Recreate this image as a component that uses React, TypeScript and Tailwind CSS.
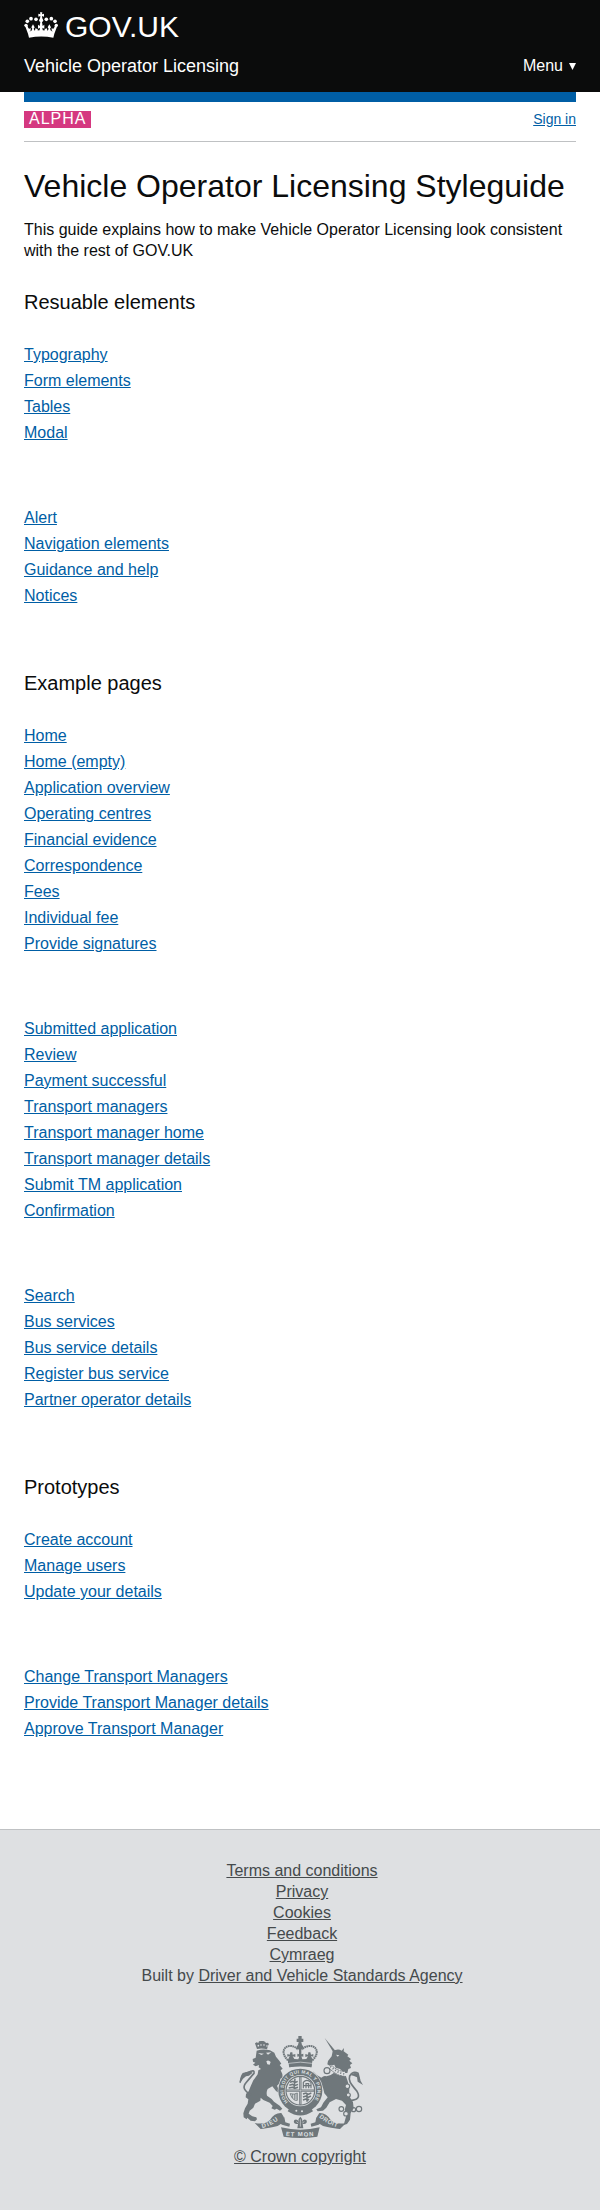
import React from "react";

const sections: { title: string; groups: string[][] }[] = [
  {
    title: "Resuable elements",
    groups: [
      ["Typography", "Form elements", "Tables", "Modal"],
      ["Alert", "Navigation elements", "Guidance and help", "Notices"],
    ],
  },
  {
    title: "Example pages",
    groups: [
      [
        "Home",
        "Home (empty)",
        "Application overview",
        "Operating centres",
        "Financial evidence",
        "Correspondence",
        "Fees",
        "Individual fee",
        "Provide signatures",
      ],
      [
        "Submitted application",
        "Review",
        "Payment successful",
        "Transport managers",
        "Transport manager home",
        "Transport manager details",
        "Submit TM application",
        "Confirmation",
      ],
      ["Search", "Bus services", "Bus service details", "Register bus service", "Partner operator details"],
    ],
  },
  {
    title: "Prototypes",
    groups: [
      ["Create account", "Manage users", "Update your details"],
      ["Change Transport Managers", "Provide Transport Manager details", "Approve Transport Manager"],
    ],
  },
];

const footerLinks = ["Terms and conditions", "Privacy", "Cookies", "Feedback", "Cymraeg"];

function Crown() {
  return (
    <svg className="h-[27px] w-[35px] shrink-0" viewBox="73 35 105 81" fill="#fff">
      {/* top cross and orb */}
      <path d="M121 36h7l-1 6 6-2v9l-6-2 1 9h-7l1-9-6 2v-9l6 2z" />
      <circle cx="124.500" cy="60" r="6" />
      {/* rim and base */}
      <path d="M76 76l6-3 8 20q35-7 69 0l8-20 6 3-9 24-3 12q-36-7-73 0l-3-12z" />
      <path d="M122 65h5l2 12 5-4v12l-6-3 2 12h-11l2-12-6 3V73l5 4z" />
      <path d="M100 72l5 9-3 4 4 9H94l4-9-3-4zM149 72l-5 9 3 4-4 9h12l-4-9 3-4z" />
      <path d="M84 83q5 4 9 0v8l-7 2zM165 83q-5 4-9 0v8l7 2zM107 84l7 2v7h-8zM142 84l-7 2v7h8z" />
      {/* arches */}
      <circle cx="79" cy="75" r="5" />
      <circle cx="83" cy="63" r="5.500" />
      <circle cx="94" cy="55" r="5.500" />
      <circle cx="109" cy="57" r="5.500" />
      <circle cx="140" cy="57" r="5.500" />
      <circle cx="155" cy="55" r="5.500" />
      <circle cx="166" cy="63" r="5.500" />
      <circle cx="170" cy="75" r="5" />
    </svg>
  );
}

function Crest() {
  return (
    <svg className="h-[103px] w-[125px]" viewBox="51 45 375 309" fill="#6f777b" stroke="none">
      <defs>
        <path id="garter" d="M201 246A51 51 0 1 1 275 246" />
        <path id="scroll-left" d="M124 324Q155 317 180 293" />
        <path id="scroll-mid" d="M194 347Q238 352 282 347" />
        <path id="scroll-right" d="M294 292Q322 316 357 323" />
      </defs>

      {/* lion */}
      <path d="M108 87l-4-11-2-6 5-3 5 2 2-5 6-1h7l5 2 3 4 5-1 4 4-3 5-3 11q-15-4-30-1z" />
      <g fill="#dee0e2">
        <circle cx="112" cy="77" r="2.500" />
        <circle cx="120" cy="75" r="2.500" />
        <circle cx="129" cy="75" r="2.500" />
        <circle cx="138" cy="78" r="2.500" />
      </g>
      <path d="M107 92q20-7 40-1l13 7 5 12 10 12 6 9-5 4 9 11-6 5 5 11 1 12-7 2-1 13-9 8 4 10 8 9-3 5-12-8-11-14-14 8q-5 9-2 20l14 10 7 8 17 12 8 9-7 6-10-6-6 3-10-4 4-7-9-10-19-8-8-7-1 9-16 9-5 12-11 9-3 9 11 8 12 3 2 6-6 6-13-2-10-9-2 5-9-6-1-12 5-15 8-14 2-13-8-6 1-10 8-8 6-15 8-18 13-18 2-12 8-4-7-5 1-7-10 4-8-5 7-6-7-3-1-8 9-4z" />
      <path d="M111 99l18 2-8 4zM135 98l16-1-10 7zM136 124q6-6 13 2l-3 8-7-1z" fill="#dee0e2" />
      <path d="M91 224Q58 208 75 188T99 160Q101 149 90 154T74 160Q62 166 57 188" fill="none" stroke="#6f777b" strokeWidth="5" />
      <path d="M57 190q-1-20 8-31l22-5 8 4-11 9-9 2-9 7z" />

      {/* unicorn */}
      <path d="M311 54l32 38-7 3z" />
      <path d="M335 94q15-10 27-2l7-8-1 10 14 10-3 5 11 8-5 5 9 8-7 5 3 9-8 3-3 12-10 0-12-12-13-4-4-9-14 3-7-4 2-10 11-14z" />
      <path d="M344 155l31 14 6 18 4 22-1 18 12 20 2 18-9 14-2 20-9 13-10 3 9-32-6-13 4-15-12-13-18-5-19 10-10 16-10 9-16 2-4-6 14-6 7-14 13-16-10-12-4-17-9-4-9 10-7-4 2-10 14-8-4-9-11-6-8-8-8 1 2-7 9-3 10 10 14 8q8-8 16-4l12-4z" />
      <path d="M327 139q20 22 45 23" fill="none" stroke="#dee0e2" strokeWidth="14" />
      <path d="M324 144q22 23 46 25M330 134q18 20 44 21" fill="none" stroke="#6f777b" strokeWidth="3" strokeDasharray="6 2" />
      <path d="M328 139q20 20 44 23" fill="none" stroke="#6f777b" strokeWidth="5" strokeDasharray="3 6" />
      <path d="M345 104l10 2-5 4z" fill="#dee0e2" />
      <path d="M384 242Q424 240 408 214C397 199 380 186 386 168Q396 151 411 160L416 181" fill="none" stroke="#6f777b" strokeWidth="5" />
      <path d="M388 165q13-11 24-2l5 16 9 16-16-10-2-13-9-4z" />
      <g fill="none" stroke="#6f777b" strokeWidth="3.500">
        <circle cx="318" cy="152" r="9" />
        <circle cx="314" cy="181" r="7" />
        <circle cx="379" cy="199" r="7" fill="#dee0e2" />
        <circle cx="382" cy="225" r="6" fill="#dee0e2" />
        <circle cx="361" cy="267" r="7" fill="#dee0e2" />
        <circle cx="375" cy="281" r="7" fill="#dee0e2" />
        <circle cx="398" cy="269" r="6" />
        <circle cx="414" cy="267" r="8" />
      </g>

      {/* centre crown */}
      <path d="M232 48h10v8h5v10h-6l2 9q8 6 1 12h-14q-7-6 1-12l2-9h-6V56h5z" />
      <g fill="none" stroke="#6f777b" strokeWidth="6" strokeDasharray="5 1.500">
        <path d="M201 121C179 100 187 80 205 78Q221 77 232 89" />
        <path d="M274 121C296 100 288 80 270 78Q254 77 242 89" />
      </g>
      <path d="M234 85h7v34h-7zM201 119l5-11-7 2v-8l7 2 2-7h6l1 7 8-2v9l-8-2 5 8 12 1 3-9-6 1v-9l6 2 3-10 3 10 6-2v9l-6-1 3 9 12-1 5-8-8 2v-9l8 2 1-7h6l2 7 7-2v8l-7-2 5 11-2 11q-36-8-72 0z" />
      <path d="M203 133q35-8 70 0l-2 9q-33-7-66 0z" />

      {/* garter and shield */}
      <circle cx="238" cy="212" r="68" fill="#dee0e2" />
      <circle cx="238" cy="212" r="66" />
      <path d="M203 125q35-8 70 0l-2 17q-33-7-66 0z" />
      <path d="M204 130q34-7 68 0" fill="none" stroke="#dee0e2" strokeWidth="2" />
      <circle cx="238" cy="212" r="47" fill="#dee0e2" />
      <circle cx="238" cy="212" r="43" fill="none" stroke="#6f777b" strokeWidth="3.500" />
      <path d="M238 170v84M196 212h84" stroke="#6f777b" strokeWidth="7" />
      <path d="M238 172v80M198 212h80" stroke="#dee0e2" strokeWidth="1.500" />
      <g stroke="#6f777b" strokeWidth="4.500" fill="none">
        <path d="M207 187l9-3 6 4 8-4M205 196l10-3 6 4 10-4M203 204l12-2 6 3 10-3M222 176l-3 30" />
        <path d="M247 205V187q10-12 23 0v18M255 205v-14h8v14M246 197h26" strokeWidth="3.500" />
        <path d="M246 222l9-3 6 4 10-4M246 231l9-3 6 4 9-4M246 240l8-3 6 4 4-4M258 219v26" />
        <path d="M207 221q14 4 22-2v22q-12 4-22-20zM214 222v12M220 222v17M225 221v18" strokeWidth="2.500" />
      </g>
      <path d="M207 262q31 19 62 0l7 12q-38 25-76 0z" />
      <g fill="#dee0e2">
        <circle cx="226" cy="272" r="3" />
        <circle cx="243" cy="274" r="3" />
      </g>
      <text className="font-['Liberation_Sans'] text-[14px] font-bold" fill="#dee0e2">
        <textPath href="#garter" textLength="228">HONI SOIT QUI MAL Y PENSE</textPath>
      </text>

      {/* motto scroll */}
      <path d="M101 309q31 6 46-9 13-22 34-21l7 11q-1 27-31 31-24 5-38 6zM375 309q-31 6-46-9-13-22-34-21l-7 11q1 27 31 31 24 5 38 6z" />
      <path d="M180 322q58 14 116 0l-7 28q-50 8-101 0zM180 292q-9 17 3 22l22 6 2-9-14-4-3-15zM296 292q9 17-3 22l-22 6-2-9 14-4 3-15z" />
      <path d="M238 290q9 8 4 18 4-13 14-8 5 9-6 12h-5l2 13h-18l2-13h-5q-11-3-6-12 10-5 14 8-5-10 4-18z" />
      <path d="M238 298v22M226 305l6 4M250 305l-6 4" stroke="#dee0e2" strokeWidth="2" />
      <g className="font-['Liberation_Sans'] text-[18px] font-bold" fill="#dee0e2">
        <text>
          <textPath href="#scroll-left" textLength="54">DIEU</textPath>
        </text>
        <text>
          <textPath href="#scroll-mid" textLength="84">ET MON</textPath>
        </text>
        <text>
          <textPath href="#scroll-right" textLength="62">DROIT</textPath>
        </text>
      </g>
    </svg>
  );
}

export default function App() {
  return (
    <div className="flex h-[2210px] w-[600px] flex-col bg-white font-['Liberation_Sans',Arial,sans-serif] text-[16px] leading-[21px] text-[#0b0c0c] antialiased">
      <header className="h-[92px] bg-[#0b0c0c] px-6 pt-[12px] text-white">
        <div className="flex h-[33px] items-start">
          <Crown />
          <span className="ml-[6px] text-[30px] leading-[29px]">GOV.UK</span>
        </div>
        <div className="mt-[10px] flex items-center justify-between">
          <span className="text-[18px] leading-[22px]">Vehicle Operator Licensing</span>
          <span className="flex items-center gap-[6px]">
            <span className="relative -top-px">Menu</span>
            <svg className="h-[7px] w-[7px]" viewBox="0 0 7 7" fill="#fff">
              <path d="M0 0h7L3.500 7z" />
            </svg>
          </span>
        </div>
      </header>

      <main className="px-6">
        <div className="h-[10px] bg-[#005ea5]" />
        <div className="flex h-[40px] items-start justify-between border-b border-[#bfc1c3] pt-[9px]">
          <strong className="h-[17px] w-[67px] bg-[#d53880] pl-[5px] text-[16px] leading-[16px] font-normal tracking-[1px] text-white">
            ALPHA
          </strong>
          <a className="text-[14px] leading-[16px] text-[#005ea5] underline">Sign in</a>
        </div>

        <h1 className="mt-[25px] text-[32px] leading-[38px] whitespace-nowrap">Vehicle Operator Licensing Styleguide</h1>
        <p className="mt-[14px]">
          This guide explains how to make Vehicle Operator Licensing look consistent with the rest of GOV.UK
        </p>

        <div className="mt-[29px] flex flex-col gap-[65px]">
          {sections.map((section) => (
            <section key={section.title}>
              <h2 className="text-[20px] leading-[25px]">{section.title}</h2>
              <div className="mt-[29px] flex flex-col gap-[64px]">
                {section.groups.map((group) => (
                  <ul key={group[0]} className="flex flex-col gap-[5px]">
                    {group.map((label) => (
                      <li key={label}>
                        <a className="text-[#005ea5] underline">{label}</a>
                      </li>
                    ))}
                  </ul>
                ))}
              </div>
            </section>
          ))}
        </div>
      </main>

      <footer className="mt-auto h-[381px] border-t border-[#bfc1c3] bg-[#dee0e2] pt-[30px] text-center text-[#454a4c]">
        <ul className="pl-[4px]">
          {footerLinks.map((label) => (
            <li key={label}>
              <a className="underline">{label}</a>
            </li>
          ))}
          <li>
            Built by <a className="underline">Driver and Vehicle Standards Agency</a>
          </li>
        </ul>
        <div className="mt-[49px] flex flex-col items-center">
          <Crest />
          <a className="mt-[8px] underline">© Crown copyright</a>
        </div>
      </footer>
    </div>
  );
}
